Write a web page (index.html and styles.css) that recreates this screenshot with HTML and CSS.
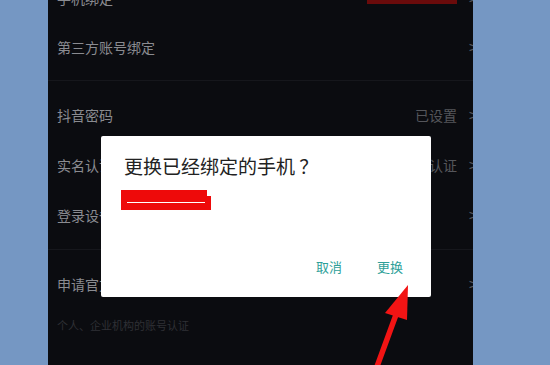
FILE: index.html
```html
<!DOCTYPE html>
<html lang="zh-CN">
<head>
<meta charset="utf-8">
<link rel="stylesheet" href="styles.css">
</head>
<body>
<div class="stage">
  <div class="panel">
    <div class="list">
      <div class="group">
        <div class="row"><span class="label">手机绑定</span><span class="value"><span class="redbar"></span></span><span class="chev">&gt;</span></div>
        <div class="row"><span class="label">第三方账号绑定</span><span class="value"></span><span class="chev">&gt;</span></div>
      </div>
      <div class="group">
        <div class="row"><span class="label">抖音密码</span><span class="value">已设置</span><span class="chev">&gt;</span></div>
        <div class="row"><span class="label">实名认证</span><span class="value">未认证</span><span class="chev">&gt;</span></div>
        <div class="row"><span class="label">登录设备管理</span><span class="value"></span><span class="chev">&gt;</span></div>
      </div>
      <div class="group last">
        <div class="row"><span class="label">申请官方认证</span><span class="value"></span><span class="chev">&gt;</span></div>
        <div class="sub">个人、企业机构的账号认证</div>
      </div>
    </div>
  </div>

  <div class="dialog">
    <div class="dlg-title">更换已经绑定的手机 ？</div>
    <div class="redact">
      <div class="rl r1"></div>
      <div class="rl r2"></div>
    </div>
    <div class="dlg-actions">
      <span class="btn">取消</span>
      <span class="btn">更换</span>
    </div>
  </div>

  <svg class="arrow" width="550" height="365" viewBox="0 0 550 365">
    <line x1="375" y1="372" x2="397" y2="312" stroke="#f21414" stroke-width="5.5" stroke-linecap="round"/>
    <polygon points="408,285 385,313 407,320" fill="#f21414"/>
  </svg>
</div>
</body>
</html>
```

FILE: styles.css
```css
* { box-sizing: border-box; }
html, body { margin: 0; padding: 0; }
body {
  width: 550px;
  height: 365px;
  overflow: hidden;
  background: #7597c3;
  font-family: "Noto Sans CJK SC", "Noto Sans", sans-serif;
}
.stage {
  position: relative;
  width: 550px;
  height: 365px;
  display: flex;
  padding-left: 48px;
}
.panel {
  width: 425px;
  height: 365px;
  background: #0b0c10;
  overflow: hidden;
}
.list {
  width: 428px;
  margin-top: -27px;
}
.group {
  border-bottom: 1px solid #16171c;
  padding-bottom: 9px;
  margin-bottom: 9px;
}
.group.last { border-bottom: none; }
.row {
  height: 50px;
  display: flex;
  align-items: center;
  padding-left: 9px;
  padding-right: 0;
  color: #8a8b90;
  font-size: 14px;
}
.group:first-child .row { height: 49px; }
.label { flex: 1; }
.value {
  font-size: 14px;
  color: #55565b;
  margin-right: 11px;
}
.redbar {
  display: inline-block;
  width: 90px;
  height: 8px;
  background: #6a0b0b;
  vertical-align: middle;
}
.chev {
  font-size: 14px;
  color: #55565b;
  width: 8px;
  font-family: "DejaVu Sans", sans-serif;
}
.sub {
  padding-left: 9px;
  margin-top: 8px;
  font-size: 11px;
  color: #2f3035;
}

.dialog {
  position: absolute;
  left: 101px;
  top: 136px;
  width: 330px;
  height: 161px;
  background: #ffffff;
  border-radius: 2px;
  padding: 16px 28px 0 23px;
  display: flex;
  flex-direction: column;
}
.dlg-title {
  font-size: 19px;
  color: #222222;
  line-height: 28px;
  white-space: nowrap;
}
.redact {
  margin-top: 10px;
  margin-left: -3px;
  position: relative;
  height: 20px;
}
.rl {
  position: absolute;
  left: 0;
  background: #ee0a0a;
}
.r1 {
  top: 0;
  width: 86px;
  height: 11px;
  background: #ee0a0a linear-gradient(#fff, #fff) no-repeat 6px 6px / 76px 1px;
}
.r2 {
  top: 6px;
  width: 90px;
  height: 14px;
  background: #ee0a0a linear-gradient(#fff, #fff) no-repeat 6px 6px / 78px 1px;
}
.dlg-actions {
  margin-top: auto;
  margin-bottom: 20px;
  display: flex;
  justify-content: flex-end;
  gap: 35px;
}
.btn {
  font-size: 13px;
  color: #2e9f99;
  line-height: 20px;
}
.arrow {
  position: absolute;
  left: 0;
  top: 0;
  pointer-events: none;
}
```
